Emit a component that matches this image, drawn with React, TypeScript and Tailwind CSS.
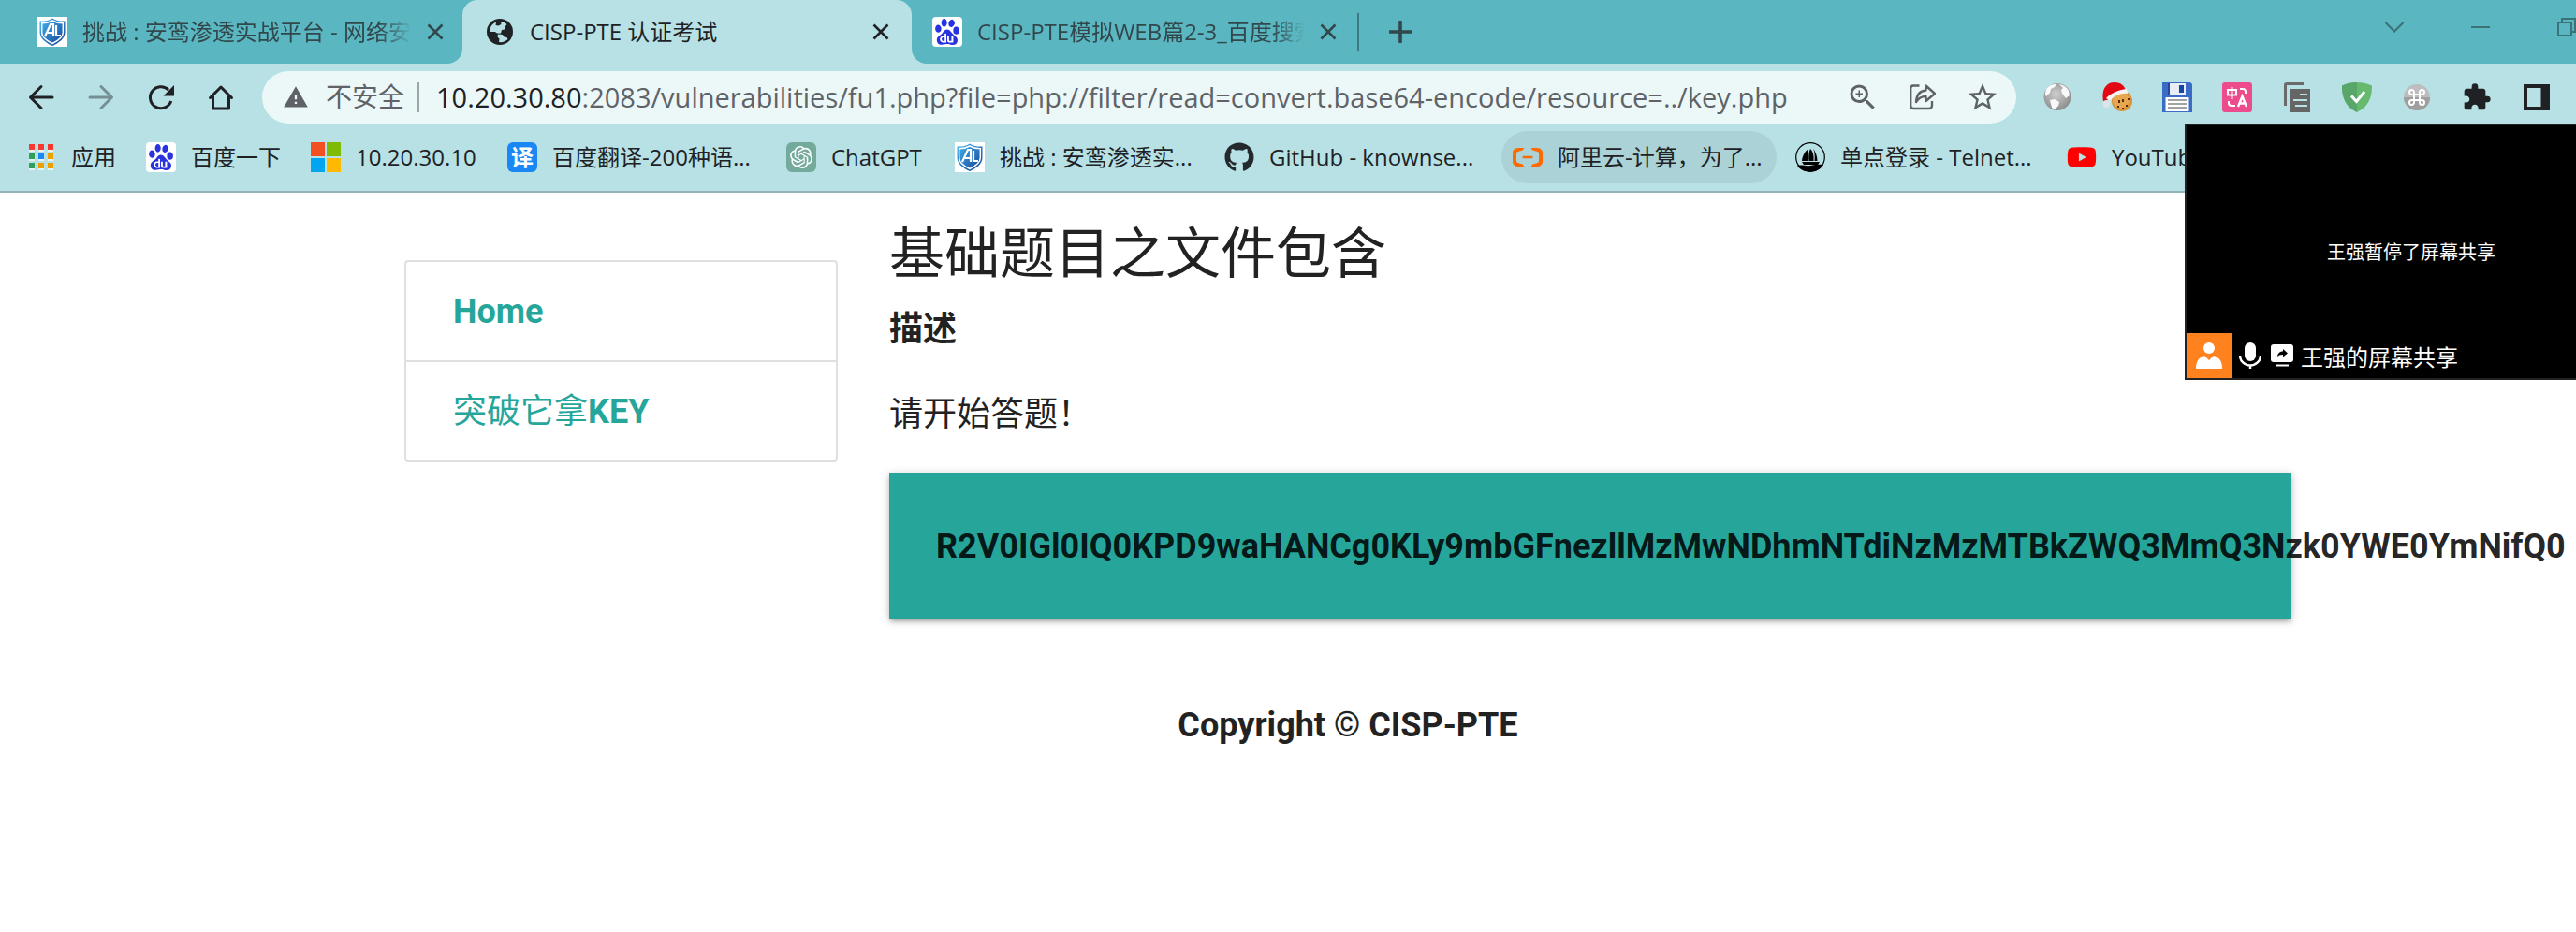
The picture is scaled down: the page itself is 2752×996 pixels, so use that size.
import type { ReactNode } from "react";
import { MdExtension, MdStarBorder, MdWarning, MdZoomIn } from "react-icons/md";
import { FaGithub, FaYoutube } from "react-icons/fa";
import { SiAlibabacloud, SiBaidu, SiOpenai } from "react-icons/si";

const uiFont = "font-['Open_Sans','Noto_Sans_CJK_SC',sans-serif]";
const pageFont = "font-['Roboto','Noto_Sans_CJK_SC',sans-serif]";

function ShieldLogo() {
  return (
    <svg viewBox="0 0 32 32" className="size-8 shrink-0" aria-hidden="true">
      <defs>
        <linearGradient id="shield" x1="0" y1="0" x2="1" y2="1">
          <stop offset="0" stopColor="#45b6ee" />
          <stop offset="1" stopColor="#123f96" />
        </linearGradient>
      </defs>
      <rect width="32" height="32" fill="#fff" />
      <path d="M16 1.500c4 2.600 8.500 3.200 13.500 3v12c0 6.500-6 11-13.500 14.500C8.500 27.500 2.500 23 2.500 16.500v-12c5 .2 9.500-.4 13.500-3z" fill="url(#shield)" />
      <path d="M16 4c3.500 2 7.500 2.700 11.300 2.700v10c0 5-4.800 8.700-11.300 11.800C9.500 25.400 4.700 21.700 4.700 16.700v-10C8.500 6.700 12.500 6 16 4z" fill="none" stroke="#fff" strokeWidth="1.500" />
      <path d="M8 21l6-13h3v13M11 17h6M20 9v11h5" fill="none" stroke="#fff" strokeWidth="2.200" />
    </svg>
  );
}

function BaiduLogo() {
  return (
    <span className="flex size-8 shrink-0 items-center justify-center rounded-sm bg-white">
      <SiBaidu className="size-7 text-[#2932e1]" />
    </span>
  );
}

function GlobeIcon() {
  return (
    <svg viewBox="0 0 28 28" className="size-7 shrink-0" aria-hidden="true">
      <circle cx="14" cy="14" r="14" fill="#202124" />
      <path d="M15 3.500c2.500-.4 5 .8 6.500 2.500l-2 2.500-.5 3-3 .5-1 3.500H11l-2-1.500H3C3.200 9 6 5 10 3.800L9.500 7l3 .5 3-1.500z" fill="#b7e1e4" />
      <path d="M13 25l.5-3.500-2-2 .5-3 5 .5 1.500 2.500 3 .5 1 2c-2.500 2.500-6 3.600-9.500 3z" fill="#b7e1e4" />
    </svg>
  );
}

function CloseIcon() {
  return (
    <svg viewBox="0 0 18 18" className="size-[18px]" fill="none" stroke="currentColor" strokeWidth="2.600" aria-hidden="true">
      <path d="M1.500 1.500l15 15M16.500 1.500l-15 15" />
    </svg>
  );
}

function AppsIcon() {
  const colors = ["#f93832", "#f93832", "#f93832", "#319f57", "#1b87f4", "#eea000", "#319f57", "#eea000", "#eea000"];
  return (
    <svg viewBox="0 0 32 32" className="size-8 shrink-0" aria-hidden="true">
      {colors.map((c, i) => (
        <g key={i}>
          <rect x={3 + (i % 3) * 10} y={3 + Math.floor(i / 3) * 10} width="6" height="7" fill="#e4f3f4" />
          <rect x={3 + (i % 3) * 10} y={2 + Math.floor(i / 3) * 10} width="6" height="6" fill={c} />
        </g>
      ))}
    </svg>
  );
}

function WindowsIcon() {
  return (
    <svg viewBox="0 0 32 32" className="size-8 shrink-0" aria-hidden="true">
      <path fill="#f35022" d="M0 0h15v15H0z" />
      <path fill="#80bb03" d="M17 0h15v15H17z" />
      <path fill="#03a5f0" d="M0 17h15v15H0z" />
      <path fill="#ffb903" d="M17 17h15v15H17z" />
    </svg>
  );
}

function SailIcon() {
  return (
    <svg viewBox="0 0 32 32" className="size-8 shrink-0" aria-hidden="true">
      <circle cx="16" cy="16" r="15.300" fill="none" stroke="#000" strokeWidth="1.200" />
      <path d="M14 7c-4 3-6.500 8-7 13h6.500c-.8-4.500-.6-9 .5-13zM16 7c3 3 4 8 3.500 13h-5c-.6-5 0-10 1.500-13zM19 6.500c2.500 3.500 4.500 8.500 4.500 13.500h-3c.6-5 .2-9.500-1.500-13.500zM7 21h19l-2 3H9z" />
      <path d="M2 25c5-1.500 9 1 14 0s8-1.500 14-1c-3 4.700-8 7.500-14 7.500S5 29.500 2 25z" />
    </svg>
  );
}

function NavIcon({ children }: { children: ReactNode }) {
  return (
    <svg viewBox="0 0 32 32" className="size-8" fill="none" stroke="currentColor" strokeWidth="3" strokeLinecap="round" strokeLinejoin="round" aria-hidden="true">
      {children}
    </svg>
  );
}

function ShareIcon() {
  return (
    <svg viewBox="0 0 28 28" className="size-7" fill="none" stroke="currentColor" strokeWidth="2.400" strokeLinejoin="round" aria-hidden="true">
      <path d="M10.500 1.500H4A3 3 0 0 0 1.200 4.500V23a3 3 0 0 0 3 3H21a3 3 0 0 0 3-3v-5" />
      <path d="M17.500 1.500v5C11 7 7.500 11 7 19c2.500-4 6-6 10.500-6v5l9.500-8z" />
    </svg>
  );
}

function WorldExt() {
  return (
    <svg viewBox="0 0 32 32" className="size-8" aria-hidden="true">
      <defs>
        <radialGradient id="globe" cx=".45" cy=".4" r=".65">
          <stop offset="0" stopColor="#cfcfcf" />
          <stop offset="1" stopColor="#888" />
        </radialGradient>
      </defs>
      <circle cx="16" cy="15.500" r="14.500" fill="url(#globe)" />
      <path d="M5 6c3-3.500 7-4.500 10-4l-2 3-4 2-1 4-4 4c-1.500-1.500-1-6 1-9zM18 2c4 .5 8 3 10 7l1 5-4 3-4-5-1-4 2-2zM8 19l5-1 5 3-1 4-4 4-3-2z" fill="#fafafa" />
    </svg>
  );
}

function CookieExt() {
  return (
    <svg viewBox="0 0 32 32" className="size-8" aria-hidden="true">
      <circle cx="21" cy="20" r="11" fill="#d8923a" />
      <circle cx="20" cy="19" r="9" fill="#e6a74e" />
      <path d="M17 19h2v3h-2zM21 18h2v3h-2zM16 25h2v2h-2zM25 24h2v2h-2zM21 27h2v2h-2zM27 17h2v2h-2z" fill="#5a2c0c" />
      <path d="M1 20C-1 9 3 0 13 0c7 0 11 4 12 9L7 16l-3 6z" fill="#e30613" />
      <path d="M4 17c4-5 13-9 22-10l1 5C18 11 12 15 8 20z" fill="#f5f5f5" />
      <circle cx="4.500" cy="23" r="4" fill="#dde3e6" />
    </svg>
  );
}

function FloppyExt() {
  return (
    <svg viewBox="0 0 32 32" className="size-8" aria-hidden="true">
      <path d="M0 0h30l2 2v30H0z" fill="#3a6bc5" />
      <path d="M7 1h18v12H7z" fill="#e9edf5" />
      <path d="M6 1h2v12H6z" fill="#23479a" />
      <path d="M18 3h5v8h-5z" fill="#1746a5" />
      <path d="M3.500 16h25v15h-25z" fill="#fff" />
      <path d="M6 19h20M6 23h20M6 27h20" stroke="#a3a3a3" strokeWidth="2" />
    </svg>
  );
}

function TranslateExt() {
  return (
    <svg viewBox="0 0 32 32" className="size-8" aria-hidden="true">
      <rect width="32" height="32" rx="3" fill="#ec4c8b" />
      <g fill="none" stroke="#fff" strokeWidth="2">
        <path d="M6 8h9v5.500H6zM10.500 5v13M19 7h3a3 3 0 0 1 3 3v2M7 20v2a3 3 0 0 0 3 3h4" />
        <path d="M17 26l4.500-11L26 26M18.500 22.500h6" strokeWidth="2.400" />
      </g>
    </svg>
  );
}

function CopyExt() {
  return (
    <svg viewBox="0 0 32 32" className="size-8" aria-hidden="true">
      <path d="M3.500 25V2.500Q3.500 1.500 5 1.500H23" fill="none" stroke="#6b6b6b" strokeWidth="3" />
      <path d="M8 7h22v25H8z" fill="#656565" />
      <path d="M19 13h8M12 19h8M19 19h8M14 25h13" stroke="#b7e1e4" strokeWidth="2.200" />
    </svg>
  );
}

function GuardExt() {
  return (
    <svg viewBox="0 0 32 32" className="size-8" aria-hidden="true">
      <path d="M16 0c5 0 11 1 16 3.500C32 17 28 26 16 32 4 26 0 17 0 3.500 5 1 11 0 16 0z" fill="#67b96d" />
      <path d="M16 0v32C4 26 0 17 0 3.500 5 1 11 0 16 0z" fill="#58a66a" />
      <path d="M10 14.500l5.500 6 8.500-10.500" fill="none" stroke="#fff" strokeWidth="3" />
    </svg>
  );
}

function CommandExt() {
  return (
    <svg viewBox="0 0 32 32" className="size-8" aria-hidden="true">
      <circle cx="16" cy="16" r="14" fill="#bdbdbd" />
      <path d="M2 16a14 14 0 0 0 28 0z" fill="#9e9e9e" />
      <path d="M13 13h6v6h-6zM13 13h-2.500A2.500 2.500 0 1 1 13 10.500zM19 13v-2.500a2.500 2.500 0 1 1 2.500 2.500zM19 19h2.500a2.500 2.500 0 1 1-2.500 2.500zM13 19v2.500a2.500 2.500 0 1 1-2.500-2.500z" fill="none" stroke="#fff" strokeWidth="2" />
    </svg>
  );
}

function PanelIcon() {
  return (
    <svg viewBox="0 0 28 28" className="size-7" aria-hidden="true">
      <path fillRule="evenodd" d="M0 0h28v28H0zM4 4v20h14.500V4z" fill="#202124" />
    </svg>
  );
}

function Bookmark({ label, icon, width, active = false }: { label: string; icon: ReactNode; width: string; active?: boolean }) {
  return (
    <a href="#" className={`flex h-14 shrink-0 items-center gap-4 rounded-full pl-3 whitespace-nowrap ${width} ${active ? "bg-[#abd2d6]" : ""}`}>
      {icon}
      <span>{label}</span>
    </a>
  );
}

function TabStrip() {
  return (
    <div className="flex h-[68px] items-stretch bg-[#5ab7c1] text-[#31474b]">
      <div className="flex w-[494px] shrink-0 bg-[#b7e1e4]">
        <div className="flex flex-1 items-center gap-4 rounded-br-2xl bg-[#5ab7c1] pr-5 pl-10">
          <ShieldLogo />
          <span className="w-[352px] shrink-0 overflow-hidden mask-r-from-90% mask-r-to-100% whitespace-nowrap">挑战 : 安鸾渗透实战平台 - 网络安全</span>
          <button type="button" aria-label="关闭标签页"><CloseIcon /></button>
        </div>
      </div>
      <div className="flex w-[480px] shrink-0 bg-[#5ab7c1]">
        <div className="flex flex-1 items-center gap-[18px] rounded-t-2xl bg-[#b7e1e4] pr-6 pl-[26px] text-[#202124]">
          <GlobeIcon />
          <span className="flex-1 whitespace-nowrap">CISP-PTE 认证考试</span>
          <button type="button" aria-label="关闭标签页"><CloseIcon /></button>
        </div>
      </div>
      <div className="flex flex-1 bg-[#b7e1e4]">
        <div className="flex flex-1 items-center rounded-bl-2xl bg-[#5ab7c1] pl-[22px]">
          <BaiduLogo />
          <span className="ml-4 w-[350px] shrink-0 overflow-hidden mask-r-from-90% mask-r-to-100% whitespace-nowrap">CISP-PTE模拟WEB篇2-3_百度搜索</span>
          <button type="button" aria-label="关闭标签页" className="ml-4"><CloseIcon /></button>
          <span className="ml-[22px] h-10 w-0.5 bg-[#3b7880]" />
          <button type="button" aria-label="新标签页" className="ml-8">
            <svg viewBox="0 0 24 24" className="size-6" stroke="currentColor" strokeWidth="3.600" aria-hidden="true"><path d="M12 0v24M0 12h24" /></svg>
          </button>
          <div className="mb-[10px] ml-auto flex items-center gap-[72px] text-[#3b7278]">
            <button type="button" aria-label="搜索标签页">
              <svg viewBox="0 0 20 20" className="size-5" fill="none" stroke="currentColor" strokeWidth="2" aria-hidden="true"><path d="M0 4.500l10 10 10-10" /></svg>
            </button>
            <button type="button" aria-label="最小化">
              <svg viewBox="0 0 20 20" className="size-5" stroke="currentColor" strokeWidth="2" aria-hidden="true"><path d="M0 10h20" /></svg>
            </button>
            <button type="button" aria-label="还原">
              <svg viewBox="0 0 20 20" className="size-5" fill="none" stroke="currentColor" strokeWidth="2" aria-hidden="true"><path d="M1 5h14v14H1zM5 5V1h14v14h-4" /></svg>
            </button>
          </div>
        </div>
      </div>
    </div>
  );
}

function Toolbar() {
  return (
    <div className="flex h-[72px] items-center text-[#202124]">
      <nav className="flex w-[280px] shrink-0 items-center gap-8 pl-7">
        <button type="button" aria-label="后退"><NavIcon><path d="M28 16H4.500M16 4.500L4.500 16 16 27.500" /></NavIcon></button>
        <button type="button" aria-label="前进" className="text-[#768f92]"><NavIcon><path d="M4 16h23.500M16 4.500L27.500 16 16 27.500" /></NavIcon></button>
        <button type="button" aria-label="重新加载">
          <NavIcon>
            <path d="M26.800 20A11.500 11.500 0 1 1 24 8" strokeLinecap="butt" />
            <path d="M30 3v11.500H18.500z" fill="currentColor" stroke="none" />
          </NavIcon>
        </button>
        <button type="button" aria-label="主页"><NavIcon><path d="M4.500 16.500L16 5l11.500 11.500M7.500 15v13h17V15" /></NavIcon></button>
      </nav>
      <form className="flex h-14 flex-1 items-center rounded-full bg-[#ecf8f8] pr-5 pl-[22px] text-[29px] text-[#5f6368]">
        <MdWarning className="size-7 shrink-0" />
        <span className="ml-[18px] shrink-0 text-[28px]">不安全</span>
        <span className="mx-[14px] h-8 w-0.5 shrink-0 bg-[#9aa7a9]" />
        <label htmlFor="address" className="ml-1 shrink-0 text-[#202124]">10.20.30.80</label>
        <input
          id="address"
          className="min-w-0 flex-1 bg-transparent outline-none"
          defaultValue=":2083/vulnerabilities/fu1.php?file=php://filter/read=convert.base64-encode/resource=../key.php"
        />
        <div className="flex shrink-0 items-center gap-8">
          <button type="button" aria-label="缩放" className="flex size-8 items-center justify-center"><MdZoomIn className="size-9 shrink-0" /></button>
          <button type="button" aria-label="分享" className="flex size-8 items-center justify-center"><ShareIcon /></button>
          <button type="button" aria-label="收藏" className="flex size-8 items-center justify-center"><MdStarBorder className="size-9 shrink-0" /></button>
        </div>
      </form>
      <div className="-mr-9 ml-7 flex shrink-0 items-center gap-8">
        <button type="button" aria-label="网络"><WorldExt /></button>
        <button type="button" aria-label="Cookie"><CookieExt /></button>
        <button type="button" aria-label="保存"><FloppyExt /></button>
        <button type="button" aria-label="翻译"><TranslateExt /></button>
        <button type="button" aria-label="复制"><CopyExt /></button>
        <button type="button" aria-label="防护"><GuardExt /></button>
        <button type="button" aria-label="快捷键"><CommandExt /></button>
        <button type="button" aria-label="扩展程序"><MdExtension className="size-8" /></button>
        <button type="button" aria-label="侧边栏" className="flex size-8 items-center justify-center"><PanelIcon /></button>
        <button type="button" aria-label="用户" className="-ml-1.5 size-9 rounded-full bg-[#f4592b]" />
      </div>
    </div>
  );
}

function BookmarkBar() {
  return (
    <nav className="flex h-[66px] items-start gap-2 border-b-2 border-[#94b3b7] pl-4 text-[#202124]">
      <Bookmark label="应用" width="w-[120px]" icon={<AppsIcon />} />
      <Bookmark label="百度一下" width="w-[168px]" icon={<BaiduLogo />} />
      <Bookmark label="10.20.30.10" width="w-[202px]" icon={<WindowsIcon />} />
      <Bookmark label="百度翻译-200种语..." width="w-[290px]" icon={<span className="flex size-8 shrink-0 items-center justify-center rounded-md bg-[#1b87f4] font-bold text-white">译</span>} />
      <Bookmark label="ChatGPT" width="w-[172px]" icon={<span className="flex size-8 shrink-0 items-center justify-center rounded-md bg-[#74aa9c] text-white"><SiOpenai className="size-6" /></span>} />
      <Bookmark label="挑战 : 安鸾渗透实..." width="w-[280px]" icon={<ShieldLogo />} />
      <Bookmark label="GitHub - knownse..." width="w-[300px]" icon={<FaGithub className="size-8 shrink-0 text-[#24292e]" />} />
      <Bookmark label="阿里云-计算，为了..." width="w-[294px]" active icon={<SiAlibabacloud className="size-8 shrink-0 text-[#ff6a00]" />} />
      <Bookmark label="单点登录 - Telnet..." width="w-[282px]" icon={<SailIcon />} />
      <Bookmark label="YouTube" width="w-[172px]" icon={<FaYoutube className="size-8 shrink-0 text-[#f00]" />} />
    </nav>
  );
}

function ShareOverlay() {
  return (
    <aside className={`absolute top-[132px] -right-[66px] flex h-[274px] w-[484px] flex-col border-2 border-[#222] bg-black text-white ${uiFont}`}>
      <p className="pt-[122px] text-center text-xl leading-7">王强暂停了屏幕共享</p>
      <div className="mt-auto flex h-12 items-center">
        <svg viewBox="0 0 48 48" className="size-12" aria-hidden="true">
          <path d="M0 0h48v48H0z" fill="#ff821e" />
          <circle cx="24" cy="16" r="6" fill="#fff" />
          <path d="M10 38c0-8 3-12 9-14l5 5 5-5c6 2 9 6 9 14z" fill="#fff" />
        </svg>
        <svg viewBox="0 0 24 28" className="ml-2 h-7 w-6" aria-hidden="true">
          <rect x="6" y="0" width="12" height="20" rx="6" fill="#fff" />
          <path d="M1 14a11 10.500 0 0 0 22 0M12 24v4" fill="none" stroke="#fff" strokeWidth="2.400" />
        </svg>
        <svg viewBox="0 0 24 24" className="ml-[10px] size-6" aria-hidden="true">
          <rect width="24" height="19" rx="3" fill="#fff" />
          <path d="M5 21.500h14v2H5z" fill="#fff" />
          <path d="M7 13c.5-4 3-5.500 6-5.500V5l5 4.500-5 4V11c-2.500-.2-4.500.5-6 2z" fill="#000" />
        </svg>
        <span className="ml-2 pt-1 text-2xl">王强的屏幕共享</span>
      </div>
    </aside>
  );
}

export default function App() {
  return (
    <div className="relative min-h-screen overflow-hidden bg-white">
      <header className={`bg-[#b7e1e4] text-2xl ${uiFont}`}>
        <TabStrip />
        <Toolbar />
        <BookmarkBar />
      </header>
      <div className={`mr-[304px] ml-[432px] text-4xl font-bold text-[#222] ${pageFont}`}>
        <div className="flex items-start gap-[55px]">
          <nav className="mt-[72px] w-[463px] shrink-0 divide-y-2 divide-[#e0e0e0] rounded border-2 border-[#e0e0e0] text-[#26a69a]">
            <a href="#" className="flex h-[107px] items-center pl-[50px]">Home</a>
            <a href="#" className="flex h-[105px] items-center pl-[50px]"><span className="font-normal">突破它拿</span>KEY</a>
          </nav>
          <main className="min-w-0 flex-1">
            <h1 className="pt-7 text-[59px] leading-[76px] font-normal">基础题目之文件包含</h1>
            <h2 className="mt-[18px] leading-[48px]">描述</h2>
            <p className="mt-[42px] leading-[50px] font-normal">请开始答题！</p>
            <div className="mt-[37px] bg-[#26a69a] px-[50px] pt-[54px] pb-[52px] leading-[50px] whitespace-nowrap text-black/87 shadow-[0_4px_4px_rgba(0,0,0,0.14),0_6px_2px_-4px_rgba(0,0,0,0.12),0_2px_10px_rgba(0,0,0,0.2)]">
              R2V0IGl0IQ0KPD9waHANCg0KLy9mbGFnezllMzMwNDhmNTdiNzMzMTBkZWQ3MmQ3Nzk0YWE0YmNifQ0
            </div>
          </main>
        </div>
        <footer className="pt-[89px] text-center leading-[50px]">Copyright © CISP-PTE</footer>
      </div>
      <ShareOverlay />
    </div>
  );
}
